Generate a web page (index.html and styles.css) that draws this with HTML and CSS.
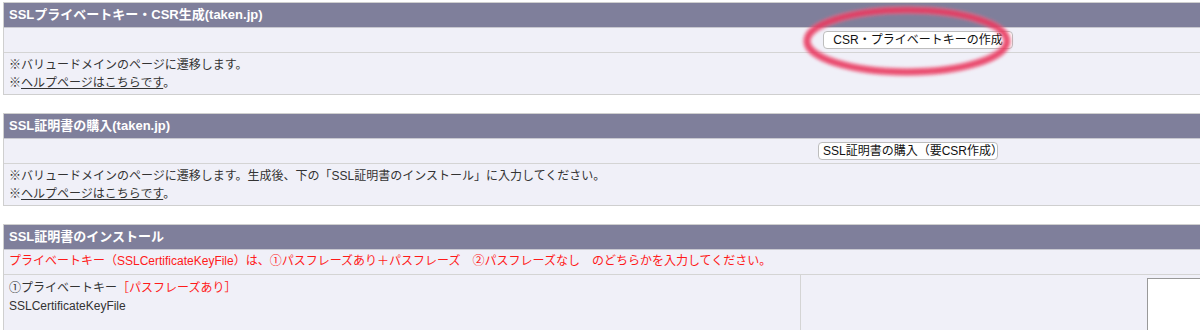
FILE: index.html
```html
<!DOCTYPE html>
<html lang="ja">
<head>
<meta charset="utf-8">
<link rel="stylesheet" href="styles.css">
</head>
<body>
<div class="page">
  <section class="box">
    <div class="head">SSLプライベートキー・CSR生成(taken.jp)</div>
    <div class="btnrow"><button class="btn btn1">CSR・プライベートキーの作成</button></div>
    <div class="text">※バリュードメインのページに遷移します。<br>※<a class="link">ヘルプページはこちらです</a>。</div>
  </section>
  <section class="box">
    <div class="head">SSL証明書の購入(taken.jp)</div>
    <div class="btnrow"><button class="btn btn2">SSL証明書の購入（要CSR作成）</button></div>
    <div class="text">※バリュードメインのページに遷移します。生成後、下の「SSL証明書のインストール」に入力してください。<br>※<a class="link">ヘルプページはこちらです</a>。</div>
  </section>
  <section class="box last">
    <div class="head">SSL証明書のインストール</div>
    <div class="note">プライベートキー（SSLCertificateKeyFile）は、①パスフレーズあり＋パスフレーズ　②パスフレーズなし　のどちらかを入力してください。</div>
    <div class="split">
      <div class="label">①プライベートキー<span class="red">［パスフレーズあり］</span><br>SSLCertificateKeyFile</div>
      <div class="field"><textarea class="ta"></textarea></div>
    </div>
  </section>
  <svg class="ring" width="240" height="90" viewBox="0 0 240 90">
    <defs><filter id="bl" x="-20%" y="-40%" width="140%" height="180%"><feGaussianBlur stdDeviation="1.6"/></filter></defs>
    <ellipse cx="120" cy="40" rx="100" ry="31" fill="none" stroke="#f06a88" stroke-width="9" opacity="0.55" filter="url(#bl)"/>
    <ellipse cx="120" cy="40" rx="100" ry="31" fill="none" stroke="#e8365c" stroke-width="5" opacity="0.8" filter="url(#bl)"/>
  </svg>
</div>
</body>
</html>
```
FILE: styles.css
```css
html, body { margin: 0; padding: 0; background: #fff; overflow: hidden; }
body { font-family: "Liberation Sans", "Noto Sans CJK JP", sans-serif; font-size: 12px; color: #333; }
.page { position: relative; padding: 2px 0 0 3px; width: 1230px; }
.box { border: 1px solid #cfcfcf; border-right: none; margin-bottom: 18px; background: #f0f0f8; }
.head { height: 24px; line-height: 24px; background: #7f7f9b; color: #fff; font-weight: bold; font-size: 13px; padding-left: 5px; border-bottom: 1px solid #c8c8d0; }
.btnrow { height: 24px; border-bottom: 1px solid #d4d4d4; display: flex; align-items: center; }
.btn { height: 18px; padding: 0 8px; background: #fff; border: 1px solid #bdbdbd; border-radius: 4px; font-family: inherit; font-size: 12px; color: #111; line-height: 16px; white-space: nowrap; }
.btn1 { margin-left: 819px; width: 190px; }
.btn2 { margin-left: 814px; width: 180px; padding: 0 4px; }
.text { padding: 3px 5px; line-height: 18px; height: 35px; }
.link { color: #333; text-decoration: underline; }
.note { height: 24px; line-height: 23px; color: #ff1a1a; padding-left: 5px; border-bottom: 1px solid #d4d4d4; }
.split { display: flex; height: 80px; }
.label { flex: none; width: 791px; padding: 4px 0 0 5px; line-height: 18px; border-right: 1px solid #d4d4d4; }
.red { color: #ff1a1a; }
.field { flex: 1; padding: 3px 0 0 346px; }
.ta { width: 200px; height: 70px; border: 1px solid #999; background: #fff; margin: 0; padding: 0; resize: none; display: block; }
.ring { position: absolute; left: 787px; top: 1px; pointer-events: none; }
```
